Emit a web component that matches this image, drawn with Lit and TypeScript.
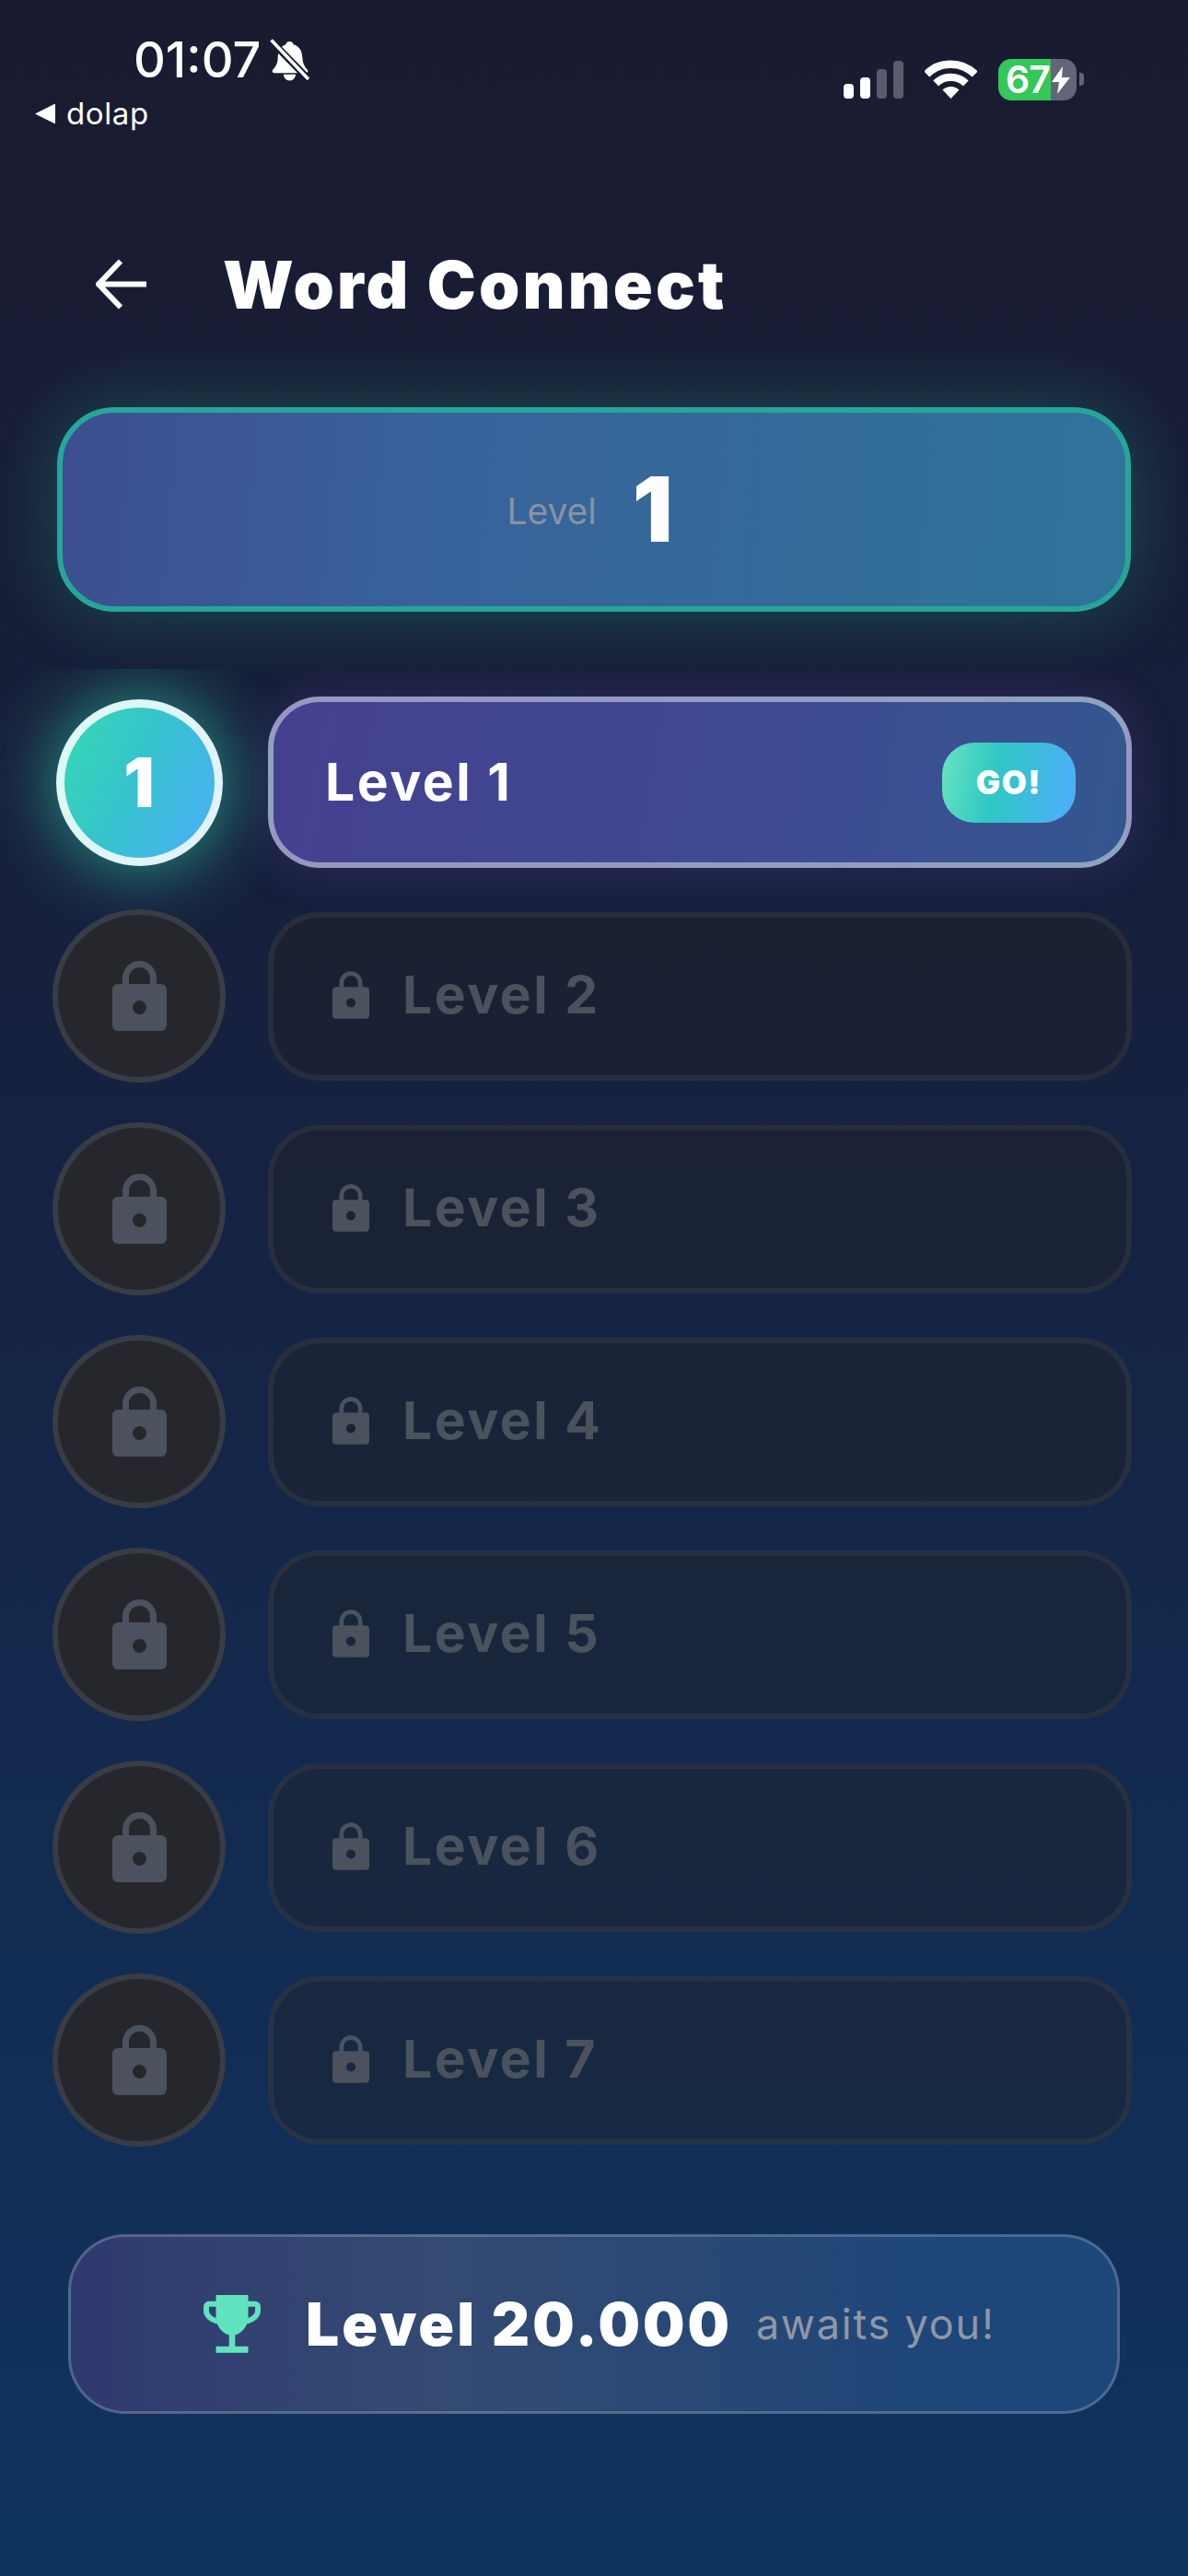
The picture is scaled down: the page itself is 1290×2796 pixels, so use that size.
import { LitElement, html, css, svg } from "lit";
import { customElement } from "lit/decorators.js";

const lock = (cls: string) => html`<svg class=${cls} viewBox="0 0 59 76"><path d="M14.5 28V18.5a15 15 0 0 1 30 0V28" fill="none" stroke="#4b525d" stroke-width="7"/><path fill-rule="evenodd" fill="#4b525d" d="M6 25h47a6 6 0 0 1 6 6v39a6 6 0 0 1-6 6H6a6 6 0 0 1-6-6V31a6 6 0 0 1 6-6Zm23.5 18a7.5 7.5 0 1 0 0 15a7.5 7.5 0 0 0 0-15Z"/></svg>`;

@customElement("app-root")
export class AppRoot extends LitElement {
  static styles = css`
    :host { display: block; width: 1290px; height: 2796px; overflow: hidden; color: #fff;
      font-family: Inter, "Noto Sans", sans-serif;
      background: linear-gradient(180deg, #1a1b30 0%, #16213f 42%, #0f3460 100%); }
    .status { height: 150px; display: flex; justify-content: space-between; box-sizing: border-box; }
    .s-left { padding: 37px 0 0 38px; }
    .time-row { display: flex; align-items: center; margin-left: 107px; height: 56px; gap: 9px; }
    .time { font-size: 54px; line-height: 56px; font-weight: 500; }
    .bell { width: 46px; height: 47px; }
    .back-app { display: flex; align-items: center; gap: 12px; margin-top: 10px; font-size: 33px; line-height: 40px; letter-spacing: 0.6px; }
    .tri { width: 22px; height: 21px; }
    .s-right { display: flex; align-items: flex-start; padding: 64px 113px 0 0; }
    .signal { display: flex; align-items: flex-end; gap: 7px; height: 43px; margin-right: 23px; }
    .signal i { display: block; width: 11px; border-radius: 4px; background: #fff; }
    .signal i.off { background: #5a5c6e; }
    .h16 { height: 16px; } .h23 { height: 23px; } .h32 { height: 32px; } .h41 { height: 41px; }
    .wifi { width: 57px; height: 43px; margin: 0 23px 0 0; }
    .bat { width: 85px; height: 45px; border-radius: 14px; display: flex; align-items: center; box-sizing: border-box; padding-left: 8px;
      background: linear-gradient(90deg, #34c759 67%, #63657a 67%);
      font-size: 41px; line-height: 45px; font-weight: 600; letter-spacing: -1px; }
    .bolt { width: 20px; height: 30px; margin-left: 2px; flex: none; }
    .tip { width: 5px; height: 14px; margin: 15px 0 0 3px; border-radius: 0 4px 4px 0; background: #63657a; }

    .header { display: flex; align-items: center; height: 72px; margin-top: 123px; padding-left: 104px; }
    .arrow { width: 57px; height: 57px; margin-right: 81px; flex: none; }
    h1 { margin: 0; font-size: 71px; line-height: 72px; font-weight: 900; letter-spacing: 3.1px; }

    .card { box-sizing: border-box; width: 1166px; height: 222px; margin: 97px 0 0 62px; border: 6px solid #26a69a; border-radius: 62px; padding-right: 9px;
      display: flex; align-items: center; justify-content: center; gap: 39px;
      background: linear-gradient(95deg, #3d4e8f 0%, #38629a 35%, #30749a 100%);
      box-shadow: 0 0 80px rgba(38, 210, 170, 0.28); }
    .card .lbl { font-size: 39px; color: #8a92a4; margin-top: 3px; }
    .card .num { font-size: 97px; font-weight: 900; line-height: 110px; }

    .list { margin-top: 62px; padding: 28px 61px 0 57px; display: flex; flex-direction: column; gap: 43px; overflow: hidden; height: 1670px; box-sizing: border-box; }
    .row { display: grid; grid-template-columns: 188px 1fr; column-gap: 46px; align-items: center; height: 188px; flex: none; }
    .row.active { height: 190px; }
    .circle { box-sizing: border-box; border-radius: 50%; display: flex; align-items: center; justify-content: center; justify-self: center; }
    .circle.on { width: 181px; height: 181px; border: 9px solid rgba(255, 255, 255, 0.84);
      background: linear-gradient(115deg, #34dcae 0%, #35c4cc 45%, #4facfe 100%); background-origin: border-box;
      box-shadow: 0 0 80px rgba(50, 225, 185, 0.68);
      font-size: 74px; font-weight: 900; }
    .circle.off { width: 188px; height: 188px; border: 6px solid #383c46; background: #26272c; }
    .big-lock { width: 59px; height: 76px; }
    .small-lock { width: 40px; height: 52px; margin-right: 36px; flex: none; }
    .panel { box-sizing: border-box; display: flex; align-items: center; border-radius: 56px; }
    .panel.on { height: 186px; padding: 0 55px 0 56px; justify-content: space-between; border: 6px solid rgba(255, 255, 255, 0.45);
      background: linear-gradient(100deg, #45408f 0%, #3e4b93 60%, #34578f 100%);
      box-shadow: 0 0 50px rgba(102, 80, 180, 0.28); }
    .panel.off { height: 183px; padding: 0 0 2px 64px; border: 6px solid rgba(70, 70, 80, 0.35); background: rgba(33, 33, 33, 0.38); }
    .t { font-size: 57px; font-weight: 700; letter-spacing: 2.5px; line-height: 70px; }
    .off .t { color: #4a525d; }
    .go { width: 145px; height: 87px; border-radius: 35px; display: flex; align-items: center; justify-content: center;
      background: linear-gradient(100deg, #68e4bf 0%, #2fc7c4 40%, #4facfe 100%);
      font-size: 35px; font-weight: 900; letter-spacing: 1.5px; }

    .footer { box-sizing: border-box; width: 1142px; height: 195px; margin: 29px 0 0 74px; border: 3px solid rgba(255, 255, 255, 0.2); border-radius: 62px;
      display: flex; align-items: center; justify-content: flex-start; padding-left: 144px;
      background: linear-gradient(90deg, #2f3a70 0%, #344a72 35%, #1d4679 85%, #1d4679 100%); }
    .trophy { width: 62px; height: 63px; margin-right: 49px; flex: none; }
    .big { font-size: 64px; font-weight: 900; letter-spacing: 3px; line-height: 72px; margin-right: 26px; }
    .await { font-size: 45px; letter-spacing: 1.8px; color: #8f97a8; }
  `;

  render() {
    return html`
      <div class="status">
        <div class="s-left">
          <div class="time-row">
            <span class="time">01:07</span>
            <svg class="bell" viewBox="0 0 43 46"><path fill="#fff" d="M21 3c2 0 3.5 1.2 4 3c6 1.6 9 6.5 9.5 13c.4 6 1.5 10 5.5 14c1 1.5 0 3.5-2 3.5H5c-2 0-3-2-2-3.500c4-4 5.500-8 5.500-14C9 12.500 12 7.600 17 6c.5-1.800 2-3 4-3Z"/><path fill="#fff" d="M14.500 38h13a6.500 6.500 0 0 1-13 0Z"/><path d="M1 2l41 42" stroke="#1a1b30" stroke-width="7.500"/><path d="M1.500 1.500L41 43" stroke="#fff" stroke-width="3.500"/></svg>
          </div>
          <div class="back-app">
            <svg class="tri" viewBox="0 0 22 21"><path fill="#fff" d="M0 10.500L20 0.500a1 1 0 0 1 2 1v18a1 1 0 0 1-2 1Z"/></svg>
            <span>dolap</span>
          </div>
        </div>
        <div class="s-right">
          <div class="signal"><i class="h16"></i><i class="h23"></i><i class="h32 off"></i><i class="h41 off"></i></div>
          <svg class="wifi" viewBox="0 0 57 43">${svg`<g fill="none" stroke="#fff"><path stroke-width="8.500" d="M2.300 16.500a37 37 0 0 1 52.400 0"/><path stroke-width="8.300" d="M12.200 26.400a23.500 23.500 0 0 1 32.600 0"/></g><path fill="#fff" d="M19.500 33.500a13 13 0 0 1 18 0L28.500 43Z"/>`}</svg>
          <div class="bat"><span>67</span><svg class="bolt" viewBox="0 0 20 30"><path fill="#fff" d="M12 0L0 17h8L6 30l14-18h-9Z"/></svg></div>
          <div class="tip"></div>
        </div>
      </div>
      <div class="header">
        <svg class="arrow" viewBox="0 0 57 57"><path d="M55 27.500H4M27 2.500L3 27.500l24 25" fill="none" stroke="#fff" stroke-width="6"/></svg>
        <h1>Word Connect</h1>
      </div>
      <div class="card"><span class="lbl">Level</span><span class="num">1</span></div>
      <div class="list">
        <div class="row active">
          <div class="circle on">1</div>
          <div class="panel on"><span class="t">Level 1</span><span class="go">GO!</span></div>
        </div>
        ${[2, 3, 4, 5, 6, 7].map(
          (n) => html`<div class="row">
            <div class="circle off">${lock("big-lock")}</div>
            <div class="panel off">${lock("small-lock")}<span class="t">Level ${n}</span></div>
          </div>`
        )}
      </div>
      <div class="footer">
        <svg class="trophy" viewBox="0 0 62 63"><path fill="#62e3bf" fill-rule="evenodd" d="M13.500 0H48.500V6.700H56a6 6 0 0 1 6 6V17c0 7-6 12-15 14.500C45 37 40 42 34.300 43.500V55.700H48.500V62.700H13.500V55.700H27.700V43.500C22 42 17 37 15 31.500C6 29 0 24 0 17V12.700a6 6 0 0 1 6-6H13.500ZM6 12.700V17c0 3.500 3 6 7.500 8V12.700ZM56 12.700H48.500V25C53 23 56 20.500 56 17Z"/></svg>
        <span class="big">Level 20.000</span>
        <span class="await">awaits you!</span>
      </div>
    `;
  }
}
